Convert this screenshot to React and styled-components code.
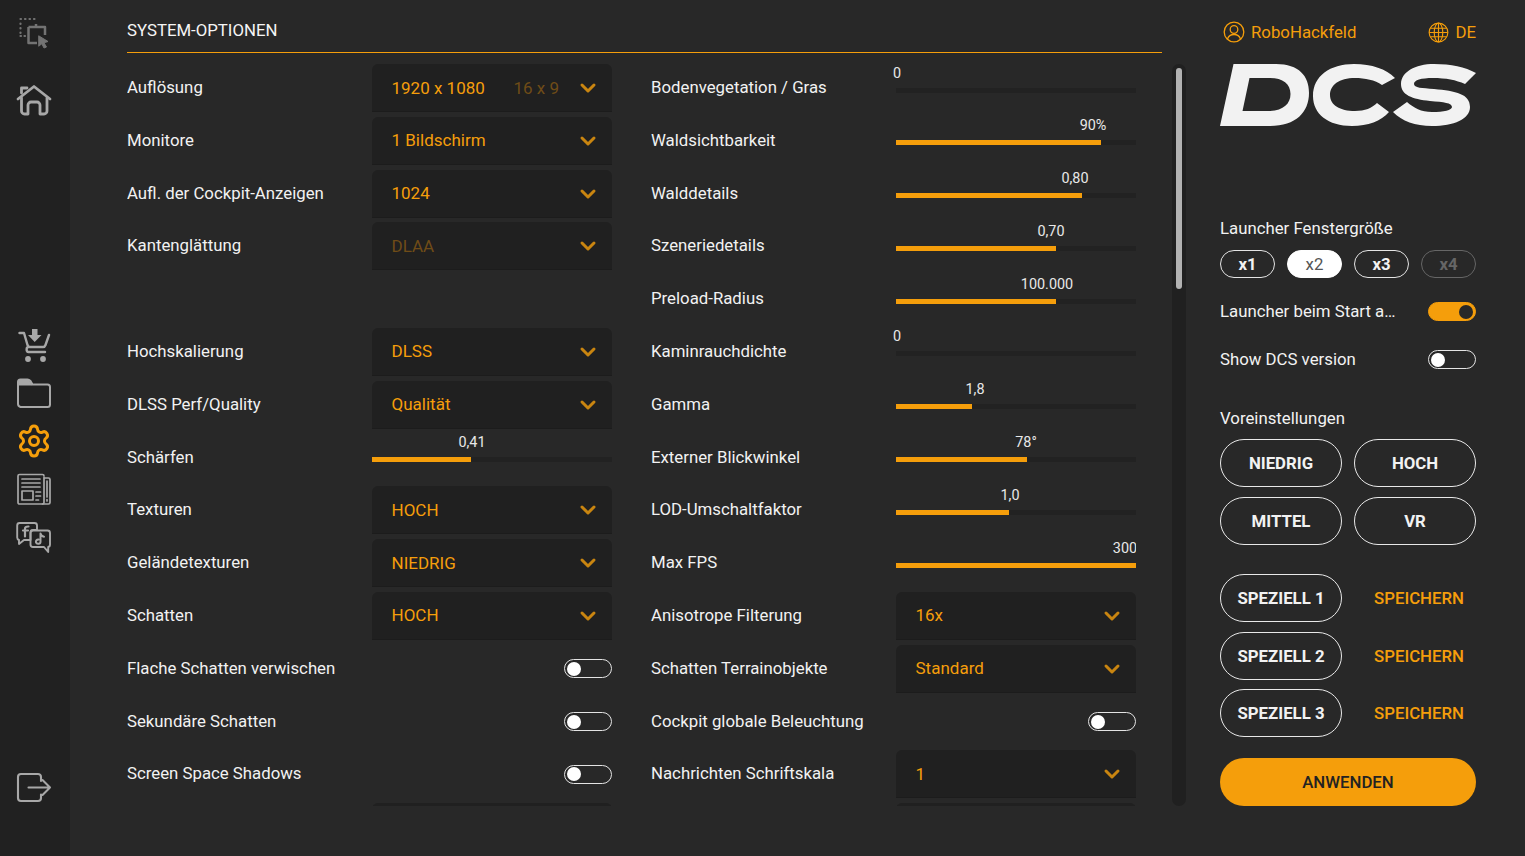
import React from "react";
import styled, { createGlobalStyle } from "styled-components";
import { Settings, ChevronDown } from "lucide-react";

const Global = createGlobalStyle`
  html, body { margin: 0; padding: 0; height: 100%; background: #282828; }
  * { box-sizing: border-box; }
  body { font-family: Roboto, "Liberation Sans", sans-serif; overflow: hidden; }
`;

const ORANGE = "#f59e0b";

const Shell = styled.div`
  display: flex;
  width: 1525px;
  height: 856px;
  background: #282828;
  color: #f2f2f2;
`;

const Sidebar = styled.nav`
  width: 70px;
  flex: none;
  background: #212121;
  display: flex;
  flex-direction: column;
  align-items: center;
  padding: 9px 2px 44px 0;
`;

const NavSlot = styled.div`
  width: 48px;
  height: 48px;
  display: flex;
  align-items: center;
  justify-content: center;
  color: ${(p) => p.$color || "#a8a8a8"};
  margin-top: ${(p) => p.$top || "0"};
`;

const Main = styled.main`
  width: 1059px;
  flex: none;
  margin-left: 57px;
  display: flex;
  flex-direction: column;
`;

const Title = styled.h1`
  margin: 0 24px 0 0;
  height: 53px;
  padding-top: 20px;
  border-bottom: 1px solid ${ORANGE};
  font-size: 16.8px;
  line-height: 20px;
  font-weight: 400;
  color: #f5f5f5;
`;

const Body = styled.div`
  display: flex;
  gap: 36px;
  margin-top: 11px;
  height: 742px;
`;

const Options = styled.div`
  width: 1009px;
  height: 742px;
  overflow: hidden;
  display: grid;
  grid-template-columns: 485px 485px;
  column-gap: 39px;
  grid-auto-rows: 48px;
  row-gap: 4.8px;
`;

const Scrollbar = styled.div`
  width: 14px;
  height: 742px;
  background: #202020;
  border-radius: 7px;
  padding: 4px;
`;

const Thumb = styled.div`
  width: 6px;
  height: 221px;
  background: #b2b2b2;
  border-radius: 3px;
`;

const Row = styled.div`
  display: grid;
  grid-template-columns: 245px 240px;
  align-items: center;
`;

const Label = styled.span`
  font-size: 16.8px;
  line-height: 20px;
  margin-top: -2px;
  color: #f2f2f2;
  white-space: nowrap;
`;

const Select = styled.div`
  height: 48px;
  background: #202020;
  border-radius: 6px 6px 0 0;
  border-bottom: 1px solid #1c1c1c;
  display: flex;
  align-items: center;
  padding: 0 12px 0 19.5px;
  font-size: 17px;
  color: ${(p) => (p.$dim ? "#6f4c17" : ORANGE)};
`;

const SelectValue = styled.span`
  flex: 1;
`;

const SelectHint = styled.span`
  color: #6f4c17;
  margin-right: 17px;
`;

const Chevron = styled(ChevronDown)`
  color: #c98510;
  flex: none;
  margin-top: 1px;
`;

const Slider = styled.div`
  position: relative;
  height: 48px;
  padding-top: 23.5px;
`;

const Track = styled.div`
  height: 5px;
  background: #222222;
`;

const Fill = styled.div`
  height: 5px;
  background: ${ORANGE};
  width: ${(p) => p.$width}px;
`;

const SliderValue = styled.span`
  position: absolute;
  top: 1.5px;
  left: ${(p) => p.$at}px;
  transform: translateX(-50%);
  font-size: 14.4px;
  line-height: 16px;
  color: #e8e8e8;
`;

const Switch = styled.div`
  justify-self: end;
  position: relative;
  width: 48px;
  height: 19px;
  border-radius: 10px;
  border: 1px solid ${(p) => (p.$on ? ORANGE : "#e4e4e4")};
  background: ${(p) => (p.$on ? ORANGE : "transparent")};
`;

const Knob = styled.span`
  position: absolute;
  top: 1.5px;
  left: ${(p) => (p.$on ? "30px" : "1.5px")};
  width: 14px;
  height: 14px;
  border-radius: 50%;
  background: ${(p) => (p.$on ? "#282828" : "#ffffff")};
`;

const Panel = styled.aside`
  width: 256px;
  flex: none;
  margin-left: 34px;
  padding-top: 20px;
  display: flex;
  flex-direction: column;
`;

const TopLine = styled.div`
  display: flex;
  justify-content: space-between;
  height: 24px;
  align-items: center;
  color: ${ORANGE};
  font-size: 16.8px;
  padding-left: 3px;
`;

const TopItem = styled.span`
  display: flex;
  align-items: center;
  gap: 6px;
`;

const Logo = styled.svg`
  display: block;
  width: 256px;
  height: 63px;
  margin-top: 20px;
`;

const PanelLabel = styled.div`
  font-size: 16.8px;
  line-height: 20px;
  color: #f2f2f2;
  margin-top: ${(p) => p.$top}px;
`;

const Pills = styled.div`
  display: flex;
  gap: 12px;
  margin-top: 12px;
`;

const Pill = styled.div`
  width: 55px;
  height: 28px;
  border-radius: 14px;
  display: flex;
  align-items: center;
  justify-content: center;
  font-size: 16.8px;
  padding-bottom: 1px;
  font-weight: ${(p) => (p.$active ? 400 : 700)};
  border: 1px solid ${(p) => (p.$active ? "#fff" : p.$off ? "#666" : "#e4e4e4")};
  background: ${(p) => (p.$active ? "#fff" : "transparent")};
  color: ${(p) => (p.$active ? "#555" : p.$off ? "#666" : "#f2f2f2")};
`;

const SwitchRow = styled.div`
  display: flex;
  justify-content: space-between;
  align-items: center;
  height: 23px;
  margin-top: ${(p) => p.$top}px;
  font-size: 16.8px;
`;

const SwitchText = styled.span`
  margin-top: -2px;
`;

const Presets = styled.div`
  display: grid;
  grid-template-columns: 122px 122px;
  gap: ${(p) => p.$gap}px 12px;
  margin-top: ${(p) => p.$top}px;
  align-items: center;
`;

const RoundButton = styled.div`
  height: 48px;
  border: 1px solid #e8e8e8;
  border-radius: 24px;
  display: flex;
  align-items: center;
  justify-content: center;
  font-size: 16.8px;
  font-weight: 700;
  color: #f2f2f2;
`;

const SaveLink = styled.div`
  text-align: center;
  color: ${ORANGE};
  font-size: 16.8px;
  font-weight: 500;
  padding-left: 8px;
`;

const Apply = styled.div`
  height: 48px;
  margin-top: 20.8px;
  padding-top: 1px;
  border-radius: 24px;
  background: ${ORANGE};
  color: #222;
  font-size: 16.8px;
  font-weight: 500;
  display: flex;
  align-items: center;
  justify-content: center;
`;

const Ic = ({ children, size = 36, sw = 2, vb = 36 }) => (
  <svg width={size} height={size} viewBox={`0 0 ${vb} ${vb}`} fill="none" stroke="currentColor" strokeWidth={sw} strokeLinecap="round" strokeLinejoin="round">
    {children}
  </svg>
);

const SelectIcon = () => (
  <Ic>
    <path d="M4.500 4h.5M9 4h.5M13.500 4h.5M18 4h.5M4.500 8.500v.5M4.500 13v.5M4.500 17.500v.5M4.500 21h.5M8.500 21h.5" strokeWidth="2.200" />
    <path d="M20 9v3M12.500 12h16.500v8M12.500 12v16h8.500" strokeWidth="2.500" strokeLinecap="butt" />
    <path d="M23 21L32 26.500L28 27.800L30.500 32L28 33L25.800 28.800L23 31Z" fill="currentColor" strokeWidth="1" />
  </Ic>
);
const HomeIcon = () => (
  <Ic sw="2.800">
    <path d="M2 17L18 4.500L34 17" />
    <path d="M5.500 11V6H11" />
    <path d="M5.500 16v13a3 3 0 0 0 3 3h3.500v-9a3 3 0 0 1 3-3h6a3 3 0 0 1 3 3v9h4a3 3 0 0 0 3-3V16" />
  </Ic>
);
const CartIcon = () => (
  <Ic>
    <path d="M3.500 6h4.500l3.500 12c.5 1.500 1 2 2.500 2h13c1.500 0 2-.5 2.500-2L33 8" strokeWidth="2.400" />
    <path d="M29 25H12.500c-2.500 0-2.500-5 0-5" strokeWidth="2.400" />
    <path d="M16 2h5.500v6h4l-6.800 7L12 8h4z" fill="currentColor" stroke="none" />
    <circle cx="12" cy="32" r="2.900" fill="currentColor" stroke="none" />
    <circle cx="27" cy="32" r="2.900" fill="currentColor" stroke="none" />
  </Ic>
);
const FolderIcon = () => (
  <Ic>
    <path d="M2 7c0-1.500 1-2.500 2.500-2.500h7c1.500 0 2 .5 3 1.500l2 3.500h15c1.500 0 2.500 1 2.500 2.500v17.500c0 1.500-1 2.500-2.500 2.500h-27C3 31.500 2 30.500 2 29z" />
    <path d="M2 10h14l-3-5H3z" fill="currentColor" strokeWidth="1" />
  </Ic>
);
const NewsIcon = () => (
  <Ic sw="1.700">
    <path d="M28 6.500V31.500c0 .8-.7 1.500-1.500 1.500H3.500c-.8 0-1.500-.7-1.500-1.500V5c0-.8.7-1.500 1.500-1.500h23c.8 0 1.500.7 1.500 1.500" />
    <path d="M28.500 7h4c.8 0 1.500.7 1.500 1.500v23c0 .8-.7 1.500-1.500 1.500h-6" />
    <path d="M6 8h18M6 12h18M6 16h18M20 21h4.500M20 25h4.500M20 29h2.500" />
    <rect x="6" y="20" width="11" height="9" />
    <path d="M31 10v16M31 28.500v1.500" />
  </Ic>
);
const SocialIcon = () => (
  <Ic sw="1.900">
    <path d="M3.500 4h15c1.400 0 2.500 1.100 2.500 2.500V11h-4c-1.500 0-2.500 1-2.500 2.500V21H8l-5 4V21c-1 -.3-1.800-1.200-1.800-2.500V6.500C1.200 5.100 2.100 4 3.500 4z" />
    <path d="M9 17.500V9.500c0-1.500 1-2 3.500-2M7 11.500h5" strokeWidth="2.200" />
    <path d="M17 11.500h14.500c1.400 0 2.500 1.100 2.500 2.500v11.500c0 1.400-.5 2.300-1.800 2.500v5L28 28H17c-1.400 0-2.500-1.100-2.500-2.500V14c0-1.400 1.100-2.500 2.500-2.500z" />
    <path d="M24.500 14.500v8.500c0 2-3.800 2.500-4.500.4-.5-1.800 1-3 2.500-2.800M24.500 14.500c.3 1.800 1.500 2.900 3.500 3.200" strokeWidth="2" />
  </Ic>
);
const LogoutIcon = () => (
  <Ic sw="2.100">
    <path d="M25 11V7c0-1.700-1.300-3-3-3H5C3.300 4 2 5.300 2 7v21c0 1.700 1.300 3 3 3h17c1.700 0 3-1.300 3-3v-3.500" />
    <path d="M12.500 17.500h21.500M26.500 10l7.500 7.500-7.500 7.500" />
  </Ic>
);
const UserIcon = () => (
  <svg width="22" height="22" viewBox="0 0 22 22" fill="none" stroke="currentColor" strokeWidth="1.300">
    <circle cx="11" cy="11" r="9.800" />
    <circle cx="11" cy="8.500" r="3.800" />
    <path d="M4.500 18c1-3 3.500-4.500 6.500-4.500s5.500 1.500 6.500 4.500" />
  </svg>
);
const GlobeIcon = () => (
  <svg width="21" height="21" viewBox="0 0 22 22" fill="none" stroke="currentColor" strokeWidth="1.200">
    <circle cx="11" cy="11" r="9.800" />
    <ellipse cx="11" cy="11" rx="4.500" ry="9.800" />
    <path d="M11 1.200v19.600M1.200 11h19.600M2.500 6.500h17M2.500 15.500h17" />
  </svg>
);

const DcsLogo = () => (
  <Logo viewBox="1220 64 256 63" aria-label="DCS">
    <path
      fill="#f2f2f2"
      fillRule="evenodd"
      d="M1233.500 64H1276C1299 64 1309 76 1309 93C1309 112 1296 126 1270 126H1220ZM1249.500 78L1242.500 111H1268C1283 111 1290.500 104 1290.500 94C1290.500 84 1283 78 1270 78Z"
    />
    <path
      fill="#f2f2f2"
      d="M1395 78L1382 85C1375 80 1365 78 1355 78C1339 78 1330 85 1330 95C1330 105 1340 111 1355 111C1365 111 1372 108 1377 103L1389 112C1381 121 1368 126 1352 126C1328 126 1313 114 1313 96C1313 76 1330 64 1354 64C1372 64 1386 69 1395 78Z"
    />
    <path
      fill="#f2f2f2"
      d="M1476 73L1465 84C1456 80 1446 78 1433 78C1421 78 1414 80 1414 84C1414 88 1422 88 1434 89C1456 91 1470 94 1470 107C1470 119 1454 126 1432 126C1415 126 1402 121 1393 112L1407 102C1414 108 1421 112 1432 112C1444 112 1452 110 1452 107C1452 103 1444 102 1430 101C1412 99 1401 95 1401 84C1401 72 1415 64 1434 64C1451 64 1465 67 1476 73Z"
    />
  </Logo>
);

const left = [
  ["Auflösung", "select", "1920 x 1080", { hint: "16 x 9" }],
  ["Monitore", "select", "1 Bildschirm"],
  ["Aufl. der Cockpit-Anzeigen", "select", "1024"],
  ["Kantenglättung", "select", "DLAA", { dim: true }],
  null,
  ["Hochskalierung", "select", "DLSS"],
  ["DLSS Perf/Quality", "select", "Qualität"],
  ["Schärfen", "slider", "0,41", { fill: 99, at: 100 }],
  ["Texturen", "select", "HOCH"],
  ["Geländetexturen", "select", "NIEDRIG"],
  ["Schatten", "select", "HOCH"],
  ["Flache Schatten verwischen", "switch"],
  ["Sekundäre Schatten", "switch"],
  ["Screen Space Shadows", "switch"],
  ["", "select", ""],
];
const right = [
  ["Bodenvegetation / Gras", "slider", "0", { fill: 0, at: 1 }],
  ["Waldsichtbarkeit", "slider", "90%", { fill: 205, at: 197 }],
  ["Walddetails", "slider", "0,80", { fill: 186, at: 179 }],
  ["Szeneriedetails", "slider", "0,70", { fill: 160, at: 155 }],
  ["Preload-Radius", "slider", "100.000", { fill: 160, at: 151 }],
  ["Kaminrauchdichte", "slider", "0", { fill: 0, at: 1 }],
  ["Gamma", "slider", "1,8", { fill: 76, at: 79 }],
  ["Externer Blickwinkel", "slider", "78°", { fill: 131, at: 130 }],
  ["LOD-Umschaltfaktor", "slider", "1,0", { fill: 113, at: 114 }],
  ["Max FPS", "slider", "300", { fill: 240, at: 229 }],
  ["Anisotrope Filterung", "select", "16x"],
  ["Schatten Terrainobjekte", "select", "Standard"],
  ["Cockpit globale Beleuchtung", "switch"],
  ["Nachrichten Schriftskala", "select", "1"],
  ["", "select", ""],
];

const Control = ({ type, value, opt = {} }) => {
  if (type === "select")
    return (
      <Select $dim={opt.dim}>
        <SelectValue>{value}</SelectValue>
        {opt.hint && <SelectHint>{opt.hint}</SelectHint>}
        <Chevron size={24} strokeWidth={3} />
      </Select>
    );
  if (type === "slider")
    return (
      <Slider>
        <SliderValue $at={opt.at}>{value}</SliderValue>
        <Track>
          <Fill $width={opt.fill} />
        </Track>
      </Slider>
    );
  return (
    <Switch>
      <Knob />
    </Switch>
  );
};

const OptionRow = ({ row }) =>
  row ? (
    <Row>
      <Label>{row[0]}</Label>
      <Control type={row[1]} value={row[2]} opt={row[3]} />
    </Row>
  ) : (
    <Row />
  );

export default function App() {
  return (
    <Shell>
      <Global />
      <Sidebar>
        <NavSlot $color="#737373"><SelectIcon /></NavSlot>
        <NavSlot $top="19px"><HomeIcon /></NavSlot>
        <NavSlot $top="197px"><CartIcon /></NavSlot>
        <NavSlot><FolderIcon /></NavSlot>
        <NavSlot $color={ORANGE}><Settings size={36} strokeWidth={2} /></NavSlot>
        <NavSlot><NewsIcon /></NavSlot>
        <NavSlot><SocialIcon /></NavSlot>
        <NavSlot $top="auto"><LogoutIcon /></NavSlot>
      </Sidebar>
      <Main>
        <Title>SYSTEM-OPTIONEN</Title>
        <Body>
          <Options>
            {left.map((l, i) => (
              <React.Fragment key={i}>
                <OptionRow row={l} />
                <OptionRow row={right[i]} />
              </React.Fragment>
            ))}
          </Options>
          <Scrollbar><Thumb /></Scrollbar>
        </Body>
      </Main>
      <Panel>
        <TopLine>
          <TopItem><UserIcon />RoboHackfeld</TopItem>
          <TopItem><GlobeIcon />DE</TopItem>
        </TopLine>
        <DcsLogo />
        <PanelLabel $top={91}>Launcher Fenstergröße</PanelLabel>
        <Pills>
          <Pill>x1</Pill>
          <Pill $active>x2</Pill>
          <Pill>x3</Pill>
          <Pill $off>x4</Pill>
        </Pills>
        <SwitchRow $top={22}>
          <SwitchText>Launcher beim Start a…</SwitchText>
          <Switch $on><Knob $on /></Switch>
        </SwitchRow>
        <SwitchRow $top={25}>
          <SwitchText>Show DCS version</SwitchText>
          <Switch><Knob /></Switch>
        </SwitchRow>
        <PanelLabel $top={37}>Voreinstellungen</PanelLabel>
        <Presets $top={11} $gap={10}>
          <RoundButton>NIEDRIG</RoundButton>
          <RoundButton>HOCH</RoundButton>
          <RoundButton>MITTEL</RoundButton>
          <RoundButton>VR</RoundButton>
        </Presets>
        <Presets $top={29} $gap={9.6}>
          <RoundButton>SPEZIELL 1</RoundButton>
          <SaveLink>SPEICHERN</SaveLink>
          <RoundButton>SPEZIELL 2</RoundButton>
          <SaveLink>SPEICHERN</SaveLink>
          <RoundButton>SPEZIELL 3</RoundButton>
          <SaveLink>SPEICHERN</SaveLink>
        </Presets>
        <Apply>ANWENDEN</Apply>
      </Panel>
    </Shell>
  );
}
